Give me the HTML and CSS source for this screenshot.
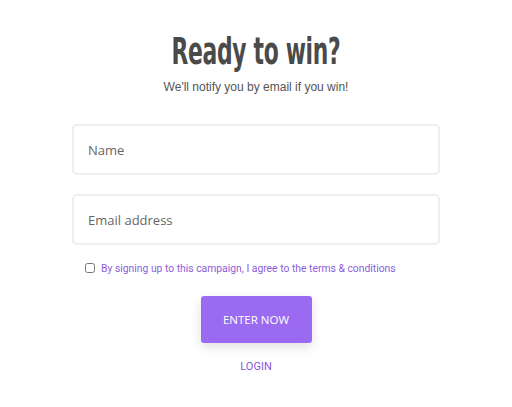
FILE: index.html
```html
<!DOCTYPE html>
<html>
<head>
<meta charset="utf-8">
<link rel="stylesheet" href="styles.css">
</head>
<body>
<div class="page">
  <h1 class="title">Ready to win?</h1>
  <p class="subtitle">We'll notify you by email if you win!</p>
  <form class="form">
    <input class="field" type="text" placeholder="Name">
    <input class="field" type="text" placeholder="Email address">
    <label class="terms"><input type="checkbox" class="check"><span>By signing up to this campaign, I agree to the terms &amp; conditions</span></label>
    <button type="button" class="btn">ENTER NOW</button>
    <a class="login">LOGIN</a>
  </form>
</div>
</body>
</html>
```
FILE: styles.css
```css
html, body { margin: 0; padding: 0; background: #fff; }
.page {
  width: 512px;
  display: flex;
  flex-direction: column;
  align-items: center;
  padding-top: 29px;
}
.title {
  margin: 0;
  font-family: "DejaVu Sans Condensed", "DejaVu Sans", sans-serif;
  font-weight: bold;
  font-size: 38px;
  line-height: 44px;
  color: #4a4a4a;
  letter-spacing: -0.5px;
  transform: scaleX(0.64);
}
.subtitle {
  margin: 6px 0 0;
  font-family: "Liberation Sans", Arial, sans-serif;
  font-size: 12px;
  line-height: 16px;
  color: #555;
}
.form {
  width: 368px;
  margin-top: 29px;
  display: flex;
  flex-direction: column;
  align-items: center;
}
.field {
  box-sizing: border-box;
  width: 368px;
  height: 51px;
  margin: 0 0 19px;
  border: 2px solid #eeeeee;
  border-radius: 5px;
  padding: 0 14px;
  font-family: "Open Sans", sans-serif;
  font-size: 13px;
  color: #555;
  outline: none;
}
.field::placeholder { color: #666; }
.field + .field { margin-bottom: 15px; }
.terms {
  align-self: stretch;
  display: flex;
  align-items: center;
  padding-left: 13px;
  font-family: Roboto, sans-serif;
  font-size: 10.35px;
  color: #8d5ddb;
  height: 16px;
}
.check {
  width: 10px;
  height: 10px;
  margin: 0 6px 0 0;
}
.btn {
  margin-top: 20px;
  width: 111px;
  height: 47px;
  border: none;
  border-radius: 3px;
  background: #9a6bf0;
  color: #fff;
  font-family: "Open Sans", sans-serif;
  font-size: 11.5px;
  box-shadow: 0 4px 12px rgba(0,0,0,0.12);
}
.login {
  margin-top: 17px;
  font-family: Roboto, sans-serif;
  font-size: 11px;
  color: #8a55d8;
}
```
